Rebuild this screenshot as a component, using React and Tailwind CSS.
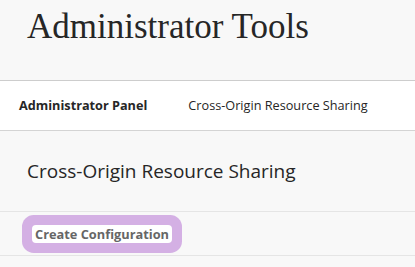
import React from "react";

export default function App() {
  return (
    <div className="w-[415px] h-[267px] bg-[#f8f8f8] overflow-hidden">
      <header className="h-[81px] border-b border-[#cdcdcd] px-[27px] pt-[6px]">
        <h1 className="text-[35px] leading-[42px] text-[#262626] font-['Liberation_Serif',serif]">
          Administrator Tools
        </h1>
      </header>

      <nav className="h-[50px] bg-white border-b border-[#d4d4d4] flex items-center gap-[41px] px-[19px] text-[12.7px] text-[#262626] font-['Open_Sans',sans-serif]">
        <span className="font-bold">Administrator Panel</span>
        <span>Cross-Origin Resource Sharing</span>
      </nav>

      <section className="h-[81px] border-b border-[#e5e5e5] flex items-center px-[27px]">
        <h2 className="text-[19px] text-[#262626] font-['Open_Sans',sans-serif]">
          Cross-Origin Resource Sharing
        </h2>
      </section>

      <div className="h-[44px] border-b border-[#e5e5e5] flex items-center px-[32px]">
        <button className="bg-white rounded-[4px] px-[3px] h-[18px] leading-[18px] text-[12.8px] font-bold text-[#666666] ring-[10px] ring-[#d4b0e4] font-['Open_Sans',sans-serif]">
          Create Configuration
        </button>
      </div>
    </div>
  );
}
